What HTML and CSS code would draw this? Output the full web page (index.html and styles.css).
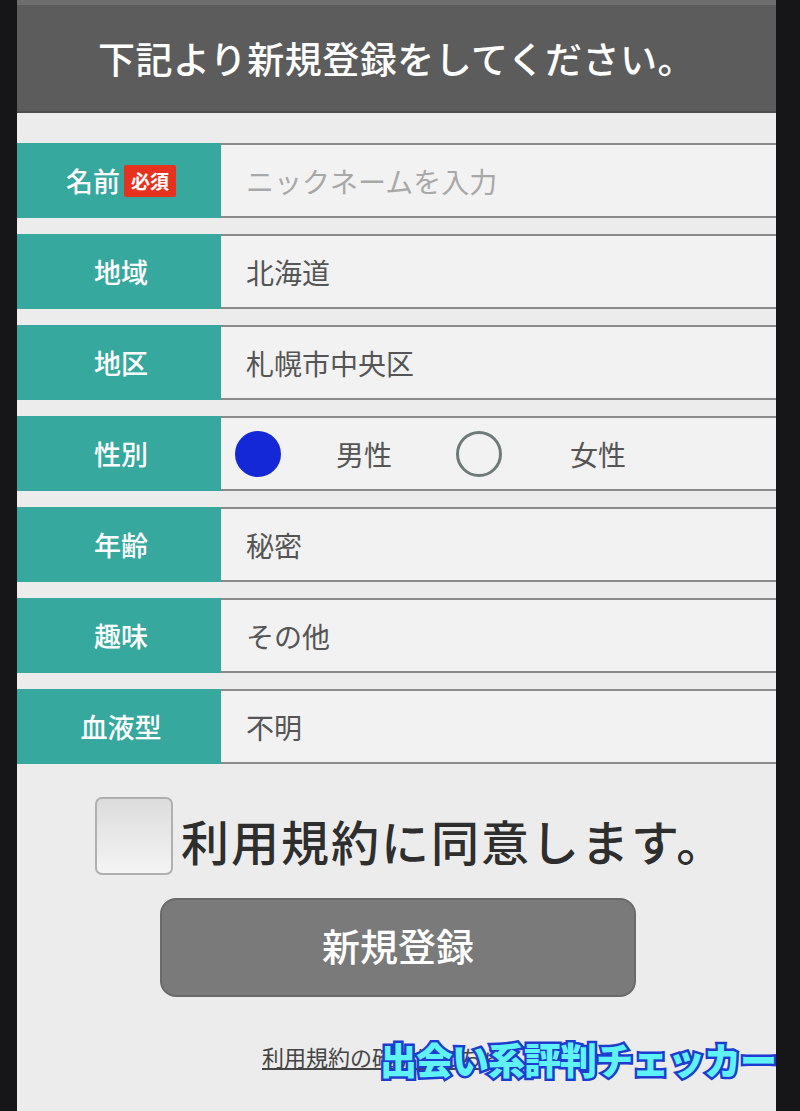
FILE: index.html
```html
<!DOCTYPE html>
<html lang="ja">
<head>
<meta charset="utf-8">
<title>新規登録</title>
<link rel="stylesheet" href="styles.css">
</head>
<body>
<div class="screen">
  <header class="header"><h1 class="title">下記より新規登録をしてください。</h1></header>
  <form class="form">
    <div class="row">
      <div class="label">名前<span class="badge">必須</span></div>
      <div class="field placeholder">ニックネームを入力</div>
    </div>
    <div class="row">
      <div class="label">地域</div>
      <div class="field">北海道</div>
    </div>
    <div class="row">
      <div class="label">地区</div>
      <div class="field">札幌市中央区</div>
    </div>
    <div class="row">
      <div class="label">性別</div>
      <div class="field radios">
        <span class="radio checked"></span><span class="radio-text first">男性</span>
        <span class="radio"></span><span class="radio-text second">女性</span>
      </div>
    </div>
    <div class="row">
      <div class="label">年齢</div>
      <div class="field">秘密</div>
    </div>
    <div class="row">
      <div class="label">趣味</div>
      <div class="field">その他</div>
    </div>
    <div class="row">
      <div class="label">血液型</div>
      <div class="field">不明</div>
    </div>
    <div class="agree">
      <span class="checkbox"></span>
      <span class="agree-text">利用規約に同意します。</span>
    </div>
    <div class="btn-wrap"><div class="btn">新規登録</div></div>
    <div class="link-wrap"><span class="link">利用規約の確認はこちら</span></div>
  </form>
  <div class="watermark">出会い系評判チェッカー</div>
</div>
</body>
</html>
```
FILE: styles.css
```css
html, body {
  margin: 0;
  padding: 0;
  background: #161618;
  font-family: "Noto Sans CJK JP", "Noto Sans", sans-serif;
}
.screen {
  position: relative;
  margin-left: 17px;
  width: 759px;
  height: 1111px;
  background: #ececec;
  overflow: hidden;
}
.header {
  height: 106px;
  background: #5c5c5c;
  border-top: 5px solid #6e6e6e;
  border-bottom: 2px solid #4e4e4e;
  display: flex;
  align-items: center;
  justify-content: center;
}
.title {
  margin: 0;
  color: #fff;
  font-size: 37px;
  font-weight: 500;
  letter-spacing: 0.5px;
}
.form {
  padding-top: 30px;
  display: flex;
  flex-direction: column;
}
.row {
  display: flex;
  height: 75px;
  margin-bottom: 16px;
}
.label {
  width: 204px;
  box-sizing: border-box;
  flex: none;
  background: #37a89e;
  color: #fff;
  font-size: 27px;
  font-weight: 500;
  display: flex;
  align-items: center;
  justify-content: center;
  gap: 4px;
  padding-left: 4px;
}
.badge {
  background: #e6321e;
  color: #fff;
  font-size: 19px;
  font-weight: 700;
  padding: 0 7px;
  border-radius: 2px;
  line-height: 32px;
}
.field {
  flex: 1;
  background: #f2f2f2;
  border-top: 2px solid #8a8a8a;
  border-bottom: 2px solid #8a8a8a;
  display: flex;
  align-items: center;
  padding-left: 25px;
  font-size: 28px;
  color: #555;
}
.placeholder { color: #a8a8a8; }
.radios { padding-left: 14px; }
.radio {
  width: 46px;
  height: 46px;
  border-radius: 50%;
  border: 3px solid #6c7a78;
  box-sizing: border-box;
}
.radio.checked {
  background: #1428d8;
  border-color: #1428d8;
}
.radio-text.first {
  margin-left: 55px;
  margin-right: 64px;
}
.radio-text.second {
  margin-left: 68px;
}
.agree {
  display: flex;
  align-items: center;
  margin-top: 17px;
  padding-left: 78px;
}
.checkbox {
  width: 78px;
  height: 78px;
  box-sizing: border-box;
  border: 2px solid #b0b0b0;
  border-radius: 7px;
  background: linear-gradient(180deg, #dcdcdc, #f4f4f4);
}
.agree-text {
  margin-left: 8px;
  font-size: 48px;
  letter-spacing: 2px;
  color: #2e2e2e;
  font-weight: 500;
  position: relative;
  top: 4px;
}
.btn-wrap {
  display: flex;
  padding-left: 143px;
  margin-top: 23px;
}
.btn {
  width: 476px;
  height: 99px;
  box-sizing: border-box;
  background: #7a7a7a;
  border: 2px solid #6a6a6a;
  border-radius: 16px;
  color: #fff;
  font-size: 38px;
  font-weight: 500;
  display: flex;
  align-items: center;
  justify-content: center;
  padding-bottom: 6px;
}
.link-wrap {
  padding-left: 245px;
  margin-top: 43px;
}
.link {
  font-size: 22px;
  color: #444;
  text-decoration: underline;
}
.watermark {
  position: absolute;
  left: 363px;
  top: 1032px;
  font-size: 37px;
  font-weight: 900;
  color: #5ff2f6;
  -webkit-text-stroke: 5px #1e3ccf;
  paint-order: stroke fill;
  letter-spacing: -1px;
  white-space: nowrap;
}
```
